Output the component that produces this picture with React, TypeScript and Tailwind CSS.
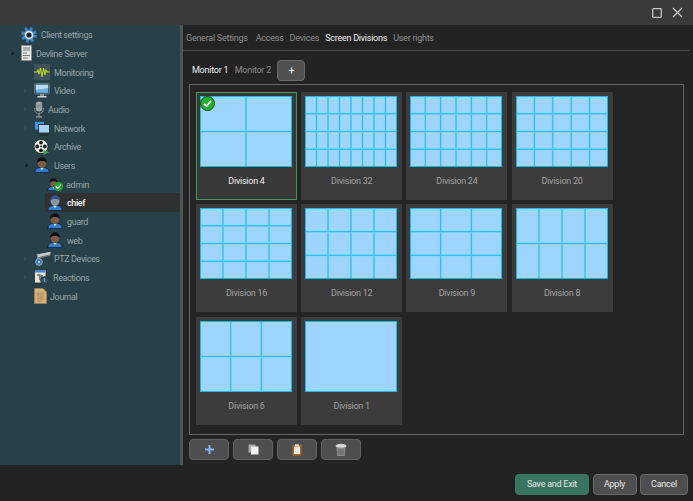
import React from "react";

const FONT = "font-['Roboto','Liberation_Sans',sans-serif]";

function UserIcon({ kind = "normal", size = 16 }: { kind?: "normal" | "faded"; size?: number }) {
  const faded = kind === "faded";
  return (
    <svg width={size} height={size} viewBox="0 0 16 16">
      <path d="M.8 15.700c0-3.700 2.400-5.400 7.200-5.400s7.200 1.700 7.200 5.400z" fill="#2f7fd0" stroke="#0e1a24" strokeWidth="0.9" />
      <path d="M6.300 10.500 8 13.200l1.700-2.700z" fill="#e8f0f4" />
      <ellipse cx="8" cy="5.800" rx="4.500" ry="5.200" fill={faded ? "#8795a5" : "#7c5c46"} />
      <path d="M3.300 6.400C2.800 2.300 5.200.2 8 .2s5.200 2.100 4.700 6.200C12 4.600 10.300 4 8 4s-4 .6-4.700 2.400z" fill={faded ? "#31578a" : "#0f1013"} />
    </svg>
  );
}

const icons: Record<string, React.ReactNode> = {
  gear: (
    <svg width="16" height="16" viewBox="0 0 16 16">
      <circle cx="8" cy="8" r="6.300" fill="none" stroke="#3f84c8" strokeWidth="3.200" strokeDasharray="2.600 2.350" />
      <circle cx="8" cy="8" r="5.500" fill="#4b8fd0" />
      <circle cx="8" cy="8" r="4" fill="#e8edf0" />
      <circle cx="8" cy="8" r="2.600" fill="#1c2228" />
    </svg>
  ),
  server: (
    <svg width="11" height="16" viewBox="0 0 11 16">
      <rect x="0.500" y="0.500" width="10" height="15" fill="#e6e6e2" stroke="#8a8f8c" strokeWidth="0.6" />
      <path d="M2 3h7M2 5h7M2 8h4M2 10.500h7M2 13h5" stroke="#77797a" strokeWidth="1" />
    </svg>
  ),
  wave: (
    <svg width="16" height="16" viewBox="0 0 16 16">
      <rect width="16" height="16" fill="#40515a" />
      <path d="M0 8h3l1-2 1 4 1.500-6 1.500 9 1.500-9L11 11l1-5 1 2h3" fill="none" stroke="#b6dc1a" strokeWidth="1.100" />
    </svg>
  ),
  monitor: (
    <svg width="16" height="15" viewBox="0 0 16 15">
      <rect x="0.500" y="0.500" width="15" height="10.500" rx="1" fill="#2c4a60" stroke="#6c7f8c" strokeWidth="0.8" />
      <rect x="1.800" y="1.800" width="12.400" height="8" fill="#6fb0de" />
      <path d="M1.800 1.800h12.400v3C10 6.500 5 5.500 1.800 7z" fill="#b9dcf2" />
      <rect x="6" y="11" width="4" height="2" fill="#8b959c" />
      <rect x="3.500" y="13" width="9" height="1.500" fill="#cfd6da" />
    </svg>
  ),
  mic: (
    <svg width="10" height="17" viewBox="0 0 10 17">
      <rect x="1.800" y="0.500" width="6.400" height="10" rx="3.200" fill="#a4a8aa" />
      <path d="M1.800 4h6.400M1.800 6h6.400" stroke="#70757a" strokeWidth="0.7" />
      <path d="M.7 7v1.500C.7 11 2.500 12.500 5 12.500S9.300 11 9.300 8.500V7" fill="none" stroke="#8f9496" strokeWidth="1" />
      <path d="M5 12.500V15M2 15.800h6" stroke="#9a9ea0" strokeWidth="1.200" />
    </svg>
  ),
  network: (
    <svg width="16" height="15" viewBox="0 0 16 15">
      <rect x="0.500" y="0.500" width="10" height="8.500" fill="#4a94dc" stroke="#1e2f40" strokeWidth="0.7" />
      <rect x="4.500" y="3.500" width="11" height="8.500" fill="#a8d2f0" stroke="#1b2a38" strokeWidth="0.9" />
      <rect x="7.500" y="12" width="5" height="1.300" fill="#333" />
      <rect x="5.500" y="13.300" width="9" height="1.200" fill="#1d2327" />
    </svg>
  ),
  reel: (
    <svg width="15" height="16" viewBox="0 0 15 16">
      <circle cx="7" cy="7.500" r="7" fill="#ecefee" stroke="#15191b" strokeWidth="0.8" />
      <circle cx="7" cy="3.600" r="1.900" fill="#1b1f21" />
      <circle cx="7" cy="11.400" r="1.900" fill="#1b1f21" />
      <circle cx="3.200" cy="7.500" r="1.900" fill="#1b1f21" />
      <circle cx="10.800" cy="7.500" r="1.900" fill="#1b1f21" />
      <circle cx="7" cy="7.500" r="0.900" fill="#1b1f21" />
      <path d="M9.500 10.500 15 13.200 9.500 15.800z" fill="#3cab3c" />
    </svg>
  ),
  ptz: (
    <svg width="16" height="15" viewBox="0 0 16 15">
      <path d="M1.500 3.500 15.500.8v2.700L3 6.500z" fill="#c3c8ca" />
      <path d="M3 6.500 15.500 3.500 15 4.800 4 7.500z" fill="#777d80" />
      <path d="M2.500 2.500v7" stroke="#8d9194" strokeWidth="1" />
      <circle cx="4" cy="11" r="3.400" fill="#3d78b4" stroke="#aeb8c0" strokeWidth="0.8" />
      <circle cx="4" cy="11" r="1" fill="#dfe8ef" />
    </svg>
  ),
  reactions: (
    <svg width="15" height="16" viewBox="0 0 15 16">
      <rect x="0.500" y="0.500" width="11.500" height="13.500" fill="#e3e3dd" stroke="#25282a" strokeWidth="0.8" />
      <rect x="1" y="1" width="10.500" height="2.500" fill="#4a86c8" />
      <path d="M3 6h3v5M8 6v5" stroke="#333" strokeWidth="1.200" fill="none" />
      <circle cx="10.500" cy="11.500" r="4" fill="#3c4a52" stroke="#1f2a30" strokeWidth="0.6" />
      <path d="M10.500 9v3.500h1" stroke="#5aa0e0" strokeWidth="1.100" fill="none" />
    </svg>
  ),
  journal: (
    <svg width="13" height="16" viewBox="0 0 13 16">
      <path d="M.5.500h8.500L12.500 4v11.500H.5z" fill="#d6b178" stroke="#a98855" strokeWidth="0.6" />
      <path d="M3 5h7M3 7h7M3 9h7M3 11h7M3 13h5" stroke="#a08455" strokeWidth="0.8" />
    </svg>
  ),
};

function Chevron() {
  return (
    <svg width="4" height="6" viewBox="0 0 4 6">
      <path d="M.8.700 3.200 3 .8 5.300" fill="none" stroke="#3f5a60" strokeWidth="0.9" />
    </svg>
  );
}

function Dot() {
  return <span className="block h-[3px] w-[3px] rounded-full bg-[#14191b]" />;
}

function Row({
  lead,
  leadClass,
  icon,
  iconClass,
  label,
  selected,
}: {
  lead?: React.ReactNode;
  leadClass: string;
  icon: React.ReactNode;
  iconClass: string;
  label: string;
  selected?: boolean;
}) {
  return (
    <div className={`flex h-[18.66px] items-center ${selected ? "ml-[45px] bg-[#2e3130] text-[#f4f4f4]" : "text-[#97a6a8]"}`}>
      <div className={`flex shrink-0 items-center justify-end ${leadClass}`}>{lead}</div>
      <div className={`flex shrink-0 items-center ${iconClass}`}>{icon}</div>
      <span className={`pt-[2px] ${selected ? "font-medium" : ""}`}>{label}</span>
    </div>
  );
}

function Sidebar() {
  return (
    <aside className="h-full w-[180px] shrink-0 bg-[#284047] pt-[0.500px] text-[9px] leading-none tracking-[-0.4px]">
      <Row leadClass="w-[21px]" iconClass="w-[20px]" icon={icons.gear} label="Client settings" />
      <Row lead={<Dot />} leadClass="w-[21px] pr-[7px]" iconClass="w-[15px]" icon={icons.server} label="Devline Server" />
      <Row leadClass="w-[34px]" iconClass="w-[20px]" icon={icons.wave} label="Monitoring" />
      <Row lead={<Chevron />} leadClass="w-[34px] pr-[7px]" iconClass="w-[20px]" icon={icons.monitor} label="Video" />
      <Row lead={<Chevron />} leadClass="w-[34px] pr-[7px]" iconClass="w-[14px]" icon={icons.mic} label="Audio" />
      <Row lead={<Chevron />} leadClass="w-[34px] pr-[7px]" iconClass="w-[20px]" icon={icons.network} label="Network" />
      <Row leadClass="w-[34px]" iconClass="w-[20px]" icon={icons.reel} label="Archive" />
      <Row lead={<Dot />} leadClass="w-[34px] pr-[6px]" iconClass="w-[20px]" icon={<UserIcon />} label="Users" />
      <Row
        leadClass="w-[47px]"
        iconClass="w-[19px] relative"
        icon={
          <>
            <UserIcon size={13} />
            <span className="absolute left-[7px] top-[4px] flex h-[9px] w-[9px] items-center justify-center rounded-full bg-[#23a52d]">
              <svg width="7" height="7" viewBox="0 0 7 7">
                <path d="M1 3.600 2.800 5.300 6 1.700" fill="none" stroke="#fff" strokeWidth="1.200" />
              </svg>
            </span>
          </>
        }
        label="admin"
      />
      <Row selected leadClass="w-[2px]" iconClass="w-[20px]" icon={<UserIcon kind="faded" />} label="chief" />
      <Row leadClass="w-[47px]" iconClass="w-[20px]" icon={<UserIcon />} label="guard" />
      <Row leadClass="w-[47px]" iconClass="w-[20px]" icon={<UserIcon />} label="web" />
      <Row lead={<Chevron />} leadClass="w-[35px] pr-[8px]" iconClass="w-[19px]" icon={icons.ptz} label="PTZ Devices" />
      <Row lead={<Chevron />} leadClass="w-[34px] pr-[7px]" iconClass="w-[19px]" icon={icons.reactions} label="Reactions" />
      <Row leadClass="w-[34px]" iconClass="w-[16px]" icon={icons.journal} label="Journal" />
    </aside>
  );
}

function Preview({ cols, rows }: { cols: number; rows: number }) {
  const W = 92;
  const H = 71;
  const xs = Array.from({ length: cols - 1 }, (_, i) => ((i + 1) * W) / cols);
  const ys = Array.from({ length: rows - 1 }, (_, i) => ((i + 1) * H) / rows);
  return (
    <svg width={W} height={H} viewBox={`0 0 ${W} ${H}`} className="block shrink-0">
      <rect width={W} height={H} fill="#9dd5ff" />
      {xs.map((x) => (
        <g key={`x${x}`}>
          <line x1={x} x2={x} y1="0" y2={H} stroke="#7fd3f6" strokeWidth="2" />
          <line x1={x} x2={x} y1="0" y2={H} stroke="#12bcec" strokeWidth="0.900" />
        </g>
      ))}
      {ys.map((y) => (
        <g key={`y${y}`}>
          <line y1={y} y2={y} x1="0" x2={W} stroke="#7fd3f6" strokeWidth="2" />
          <line y1={y} y2={y} x1="0" x2={W} stroke="#12bcec" strokeWidth="0.900" />
        </g>
      ))}
      <rect x="0.500" y="0.500" width={W - 1} height={H - 1} fill="none" stroke="#12bcec" strokeWidth="1" />
    </svg>
  );
}

const divisions = [
  { name: "Division 4", cols: 2, rows: 2 },
  { name: "Division 32", cols: 8, rows: 4 },
  { name: "Division 24", cols: 6, rows: 4 },
  { name: "Division 20", cols: 5, rows: 4 },
  { name: "Division 16", cols: 4, rows: 4 },
  { name: "Division 12", cols: 4, rows: 3 },
  { name: "Division 9", cols: 3, rows: 3 },
  { name: "Division 8", cols: 4, rows: 2 },
  { name: "Division 6", cols: 3, rows: 2 },
  { name: "Division 1", cols: 1, rows: 1 },
];

function Card({ name, cols, rows, active }: { name: string; cols: number; rows: number; active: boolean }) {
  return (
    <div
      className={`relative flex h-[108px] flex-col pb-[4px] pl-[4px] pt-[4px] ${
        active ? "bg-[#383838] shadow-[inset_0_0_0_1px_#3f9a62] text-[#ececec]" : "bg-[#3c3c3c] text-[#a2a2a2]"
      }`}
    >
      <Preview cols={cols} rows={rows} />
      <div className="flex flex-1 items-center justify-center pr-[4px] text-[9px] leading-none tracking-[-0.25px]">{name}</div>
      {active && (
        <span className="absolute left-[4px] top-[4px] flex h-[15px] w-[15px] items-center justify-center rounded-full border border-[#0f4d12] bg-[#22b02c]">
          <svg width="11" height="11" viewBox="0 0 11 11">
            <path d="M2 5.800 4.500 8.200 9 2.800" fill="none" stroke="#fff" strokeWidth="1.700" />
          </svg>
        </span>
      )}
    </div>
  );
}

function ToolButton({ children }: { children: React.ReactNode }) {
  return (
    <button className="flex h-[21px] w-[40px] items-center justify-center rounded-[4px] border border-[#626262] bg-[#4e4e4e]">
      {children}
    </button>
  );
}

function FootButton({ children, className }: { children: React.ReactNode; className: string }) {
  return (
    <button className={`flex h-[21px] items-center justify-center rounded-[4px] border text-[9px] leading-none tracking-[-0.25px] ${className}`}>
      {children}
    </button>
  );
}

function Main() {
  return (
    <main className="flex h-full min-w-0 flex-1 flex-col bg-[#232323]">
      <nav className="mr-[3px] flex h-[26px] shrink-0 items-center gap-[6px] border-b border-[#4a4a4a] pl-[3px] pt-[2px] text-[9px] leading-none tracking-[-0.25px] text-[#8f8f8f]">
        <span className="mr-[2px]">General Settings</span>
        <span>Access</span>
        <span>Devices</span>
        <span className="text-[#eeeeee]">Screen Divisions</span>
        <span>User rights</span>
      </nav>
      <div className="flex h-[33px] shrink-0 items-start pl-[9px] pt-[9px] text-[9px] leading-none tracking-[-0.25px]">
        <div className="flex h-[21px] items-center gap-[6.500px]">
          <span className="text-[#eeeeee]">Monitor 1</span>
          <span className="text-[#8a8a8a]">Monitor 2</span>
          <button className="flex h-[21px] w-[28px] items-center justify-center rounded-[4px] border border-[#6a6a6a] bg-[#505050] text-[11px] text-[#e8e8e8]">
            +
          </button>
        </div>
      </div>
      <div className="ml-[6px] mr-[9px] h-[351px] shrink-0 border border-[#666666] bg-[#242424] pl-[6px] pt-[7px]">
        <div className="grid grid-cols-[repeat(4,101px)] gap-x-[4.200px] gap-y-[4.300px]">
          {divisions.map((d, i) => (
            <Card key={d.name} {...d} active={i === 0} />
          ))}
        </div>
      </div>
      <div className="ml-[6px] mt-[4px] flex gap-[4px]">
        <ToolButton>
          <svg width="11" height="11" viewBox="0 0 11 11">
            <path d="M5.500 1v9M1 5.500h9" stroke="#7fb4f0" strokeWidth="2" />
          </svg>
        </ToolButton>
        <ToolButton>
          <svg width="11" height="11" viewBox="0 0 11 11">
            <rect x="0.500" y="0.500" width="7" height="8" fill="#a9a9a9" />
            <rect x="3" y="2.500" width="7.500" height="8" fill="#f0f0f0" />
          </svg>
        </ToolButton>
        <ToolButton>
          <svg width="10" height="12" viewBox="0 0 10 12">
            <rect x="0.500" y="1" width="9" height="10.500" fill="#a8661c" />
            <rect x="2" y="2.500" width="6" height="7.500" fill="#e9e9e4" />
            <rect x="3" y="0.300" width="4" height="2" fill="#d8d8d8" />
          </svg>
        </ToolButton>
        <ToolButton>
          <svg width="12" height="14" viewBox="0 0 12 14">
            <ellipse cx="6" cy="3" rx="5.500" ry="2.200" fill="#d6d6d6" />
            <path d="M1.500 4.500h9l-.8 8.500H2.300z" fill="#8d8d8d" />
            <path d="M4 6v6M6 6v6M8 6v6" stroke="#5a5a5a" strokeWidth="0.900" />
          </svg>
        </ToolButton>
      </div>
    </main>
  );
}

export default function App() {
  return (
    <div className={`flex h-[501px] w-[693px] flex-col overflow-hidden bg-[#222222] ${FONT}`}>
      <header className="flex h-[25px] shrink-0 items-center justify-end bg-[#3a3a3a]">
        <div className="flex items-center gap-[10px] pr-[10px]">
          <svg width="10" height="10" viewBox="0 0 10 10">
            <rect x="0.700" y="0.700" width="8.600" height="8.600" rx="0.800" fill="none" stroke="#c4c4c4" strokeWidth="1.300" />
          </svg>
          <svg width="11" height="11" viewBox="0 0 11 11">
            <path d="M1 1l9 9M10 1l-9 9" stroke="#d0d0d0" strokeWidth="1.200" />
          </svg>
        </div>
      </header>
      <div className="flex h-[440px] shrink-0">
        <Sidebar />
        <div className="h-full w-[3px] shrink-0 bg-[#4d5557]" />
        <Main />
      </div>
      <footer className="flex flex-1 items-start justify-end gap-[3.500px] pr-[5px] pt-[9px]">
        <FootButton className="w-[74px] border-[#3a7a63] bg-[#38745f] text-[#e6e6e6]">Save and Exit</FootButton>
        <FootButton className="w-[44px] border-[#6a6a6a] bg-[#4e4e4e] text-[#e6e6e6]">Apply</FootButton>
        <FootButton className="w-[48px] border-[#6a6a6a] bg-[#4e4e4e] text-[#e6e6e6]">Cancel</FootButton>
      </footer>
    </div>
  );
}
